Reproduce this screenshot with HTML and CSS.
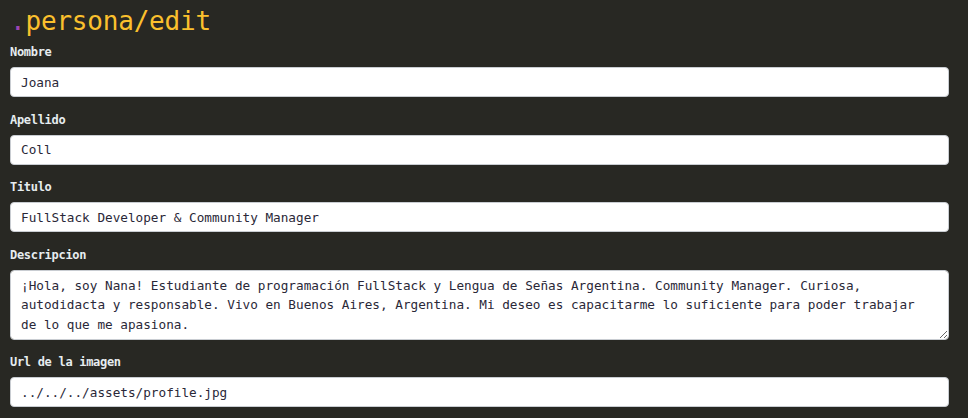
FILE: index.html
```html
<!DOCTYPE html>
<html lang="es">
<head>
<meta charset="utf-8">
<title>persona/edit</title>
<link rel="stylesheet" href="styles.css">
</head>
<body>
<main class="page">
  <h1 class="title"><span class="dot">.</span>persona/edit</h1>
  <form class="form">
    <div class="group">
      <label class="label" for="nombre">Nombre</label>
      <input class="control" id="nombre" type="text" value="Joana">
    </div>
    <div class="group">
      <label class="label" for="apellido">Apellido</label>
      <input class="control" id="apellido" type="text" value="Coll">
    </div>
    <div class="group">
      <label class="label" for="titulo">Titulo</label>
      <input class="control" id="titulo" type="text" value="FullStack Developer &amp; Community Manager">
    </div>
    <div class="group">
      <label class="label" for="desc">Descripcion</label>
      <textarea class="control area" id="desc" rows="3">¡Hola, soy Nana! Estudiante de programación FullStack y Lengua de Señas Argentina. Community Manager. Curiosa, autodidacta y responsable. Vivo en Buenos Aires, Argentina. Mi deseo es capacitarme lo suficiente para poder trabajar de lo que me apasiona.</textarea>
    </div>
    <div class="group">
      <label class="label" for="img">Url de la imagen</label>
      <input class="control" id="img" type="text" value="../../../assets/profile.jpg">
    </div>
  </form>
</main>
</body>
</html>
```

FILE: styles.css
```css
html, body {
  margin: 0;
  padding: 0;
  background: #282823;
  height: 100%;
  overflow: hidden;
}

.page {
  padding: 0 19px 0 10px;
  font-family: "DejaVu Sans Mono", "Liberation Mono", monospace;
}

.title {
  margin: 0;
  height: 43px;
  font-size: 26px;
  font-weight: normal;
  line-height: 43px;
  color: #fbc02d;
  letter-spacing: -0.2px;
}

.dot {
  color: #9c45b5;
}

.form {
  display: flex;
  flex-direction: column;
  gap: 13.5px;
}

.group {
  display: flex;
  flex-direction: column;
}

.label {
  font-size: 12px;
  font-weight: bold;
  line-height: 18px;
  color: #e6ecef;
  margin-bottom: 6px;
  letter-spacing: -0.3px;
}

.control {
  box-sizing: border-box;
  width: 100%;
  height: 30px;
  margin: 0;
  padding: 4px 10px;
  border: 1px solid #c9cdd2;
  border-radius: 4px;
  background: #ffffff;
  font-family: "DejaVu Sans Mono", "Liberation Mono", monospace;
  font-size: 12.7px;
  line-height: 19.5px;
  color: #2a2838;
  outline: none;
}

.area {
  height: 70px;
  padding: 5px 28px 5px 10px;
  resize: vertical;
  display: block;
}
```
